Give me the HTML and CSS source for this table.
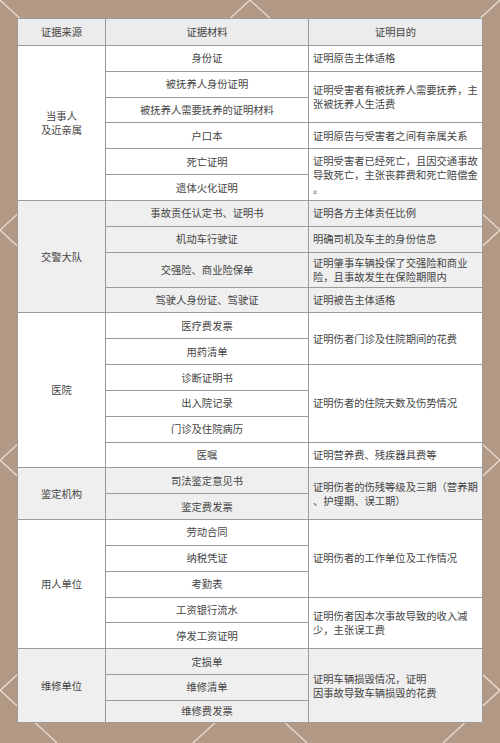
FILE: index.html
```html
<!DOCTYPE html>
<html lang="zh">
<head>
<meta charset="utf-8">
<link rel="stylesheet" href="styles.css">
</head>
<body>
<div class="page">
  <svg class="deco" width="500" height="743" viewBox="0 0 500 743" aria-hidden="true">
    <g class="lattice">
      <line x1="0" y1="0" x2="807" y2="743"/>
      <line x1="250" y1="0" x2="1057" y2="743"/>
      <line x1="0" y1="230" x2="557" y2="743"/>
      <line x1="0" y1="460" x2="307" y2="743"/>
      <line x1="0" y1="690" x2="57" y2="743"/>
      <line x1="500" y1="0" x2="-307" y2="743"/>
      <line x1="250" y1="0" x2="-557" y2="743"/>
      <line x1="500" y1="230" x2="-57" y2="743"/>
      <line x1="500" y1="460" x2="193" y2="743"/>
      <line x1="500" y1="690" x2="443" y2="743"/>
    </g>
  </svg>
  <table class="evidence">
    <colgroup>
      <col class="c1"><col class="c2"><col class="c3">
    </colgroup>
    <thead>
      <tr class="head"><th>证据来源</th><th>证据材料</th><th>证明目的</th></tr>
    </thead>
    <tbody class="white">
      <tr class="r"><td class="src" rowspan="6">当事人<br>及近亲属</td><td class="mat">身份证</td><td class="aim">证明原告主体适格</td></tr>
      <tr class="r"><td class="mat">被抚养人身份证明</td><td class="aim" rowspan="2">证明受害者有被抚养人需要抚养，主<br>张被抚养人生活费</td></tr>
      <tr class="r"><td class="mat">被抚养人需要抚养的证明材料</td></tr>
      <tr class="r"><td class="mat">户口本</td><td class="aim">证明原告与受害者之间有亲属关系</td></tr>
      <tr class="r"><td class="mat">死亡证明</td><td class="aim" rowspan="2">证明受害者已经死亡，且因交通事故<br>导致死亡，主张丧葬费和死亡赔偿金<br>。</td></tr>
      <tr class="r"><td class="mat">遗体火化证明</td></tr>
    </tbody>
    <tbody class="grey">
      <tr class="r"><td class="src" rowspan="4">交警大队</td><td class="mat">事故责任认定书、证明书</td><td class="aim">证明各方主体责任比例</td></tr>
      <tr class="r"><td class="mat">机动车行驶证</td><td class="aim">明确司机及车主的身份信息</td></tr>
      <tr class="tall"><td class="mat">交强险、商业险保单</td><td class="aim">证明肇事车辆投保了交强险和商业<br>险，且事故发生在保险期限内</td></tr>
      <tr class="r"><td class="mat">驾驶人身份证、驾驶证</td><td class="aim">证明被告主体适格</td></tr>
    </tbody>
    <tbody class="white">
      <tr class="r"><td class="src" rowspan="6">医院</td><td class="mat">医疗费发票</td><td class="aim" rowspan="2">证明伤者门诊及住院期间的花费</td></tr>
      <tr class="r"><td class="mat">用药清单</td></tr>
      <tr class="r"><td class="mat">诊断证明书</td><td class="aim" rowspan="3">证明伤者的住院天数及伤势情况</td></tr>
      <tr class="r"><td class="mat">出入院记录</td></tr>
      <tr class="r"><td class="mat">门诊及住院病历</td></tr>
      <tr class="r"><td class="mat">医嘱</td><td class="aim">证明营养费、残疾器具费等</td></tr>
    </tbody>
    <tbody class="grey">
      <tr class="r"><td class="src" rowspan="2">鉴定机构</td><td class="mat">司法鉴定意见书</td><td class="aim" rowspan="2">证明伤者的伤残等级及三期（营养期<br>、护理期、误工期）</td></tr>
      <tr class="r"><td class="mat">鉴定费发票</td></tr>
    </tbody>
    <tbody class="white">
      <tr class="r"><td class="src" rowspan="5">用人单位</td><td class="mat">劳动合同</td><td class="aim" rowspan="3">证明伤者的工作单位及工作情况</td></tr>
      <tr class="r"><td class="mat">纳税凭证</td></tr>
      <tr class="r"><td class="mat">考勤表</td></tr>
      <tr class="r"><td class="mat">工资银行流水</td><td class="aim" rowspan="2">证明伤者因本次事故导致的收入减<br>少，主张误工费</td></tr>
      <tr class="r"><td class="mat">停发工资证明</td></tr>
    </tbody>
    <tbody class="grey">
      <tr class="r"><td class="src" rowspan="3">维修单位</td><td class="mat">定损单</td><td class="aim" rowspan="3">证明车辆损毁情况，证明<br>因事故导致车辆损毁的花费</td></tr>
      <tr class="r"><td class="mat">维修清单</td></tr>
      <tr class="last"><td class="mat">维修费发票</td></tr>
    </tbody>
  </table>
</div>
</body>
</html>
```

FILE: styles.css
```css
html, body {
  margin: 0;
  padding: 0;
}

body {
  background: #b29985;
  font-family: "Noto Sans CJK SC", "Noto Sans", sans-serif;
  color: #444;
}

.page {
  position: relative;
  width: 500px;
  height: 743px;
  overflow: hidden;
  padding: 18px 0 0 17px;
  box-sizing: border-box;
}

.deco {
  position: absolute;
  left: 0;
  top: 0;
}

.lattice line {
  stroke: #e9dccd;
  stroke-width: 1.3;
}

.evidence {
  position: relative;
  width: 465px;
  table-layout: fixed;
  border-collapse: collapse;
  background: #fff;
  font-size: 10.3px;
  line-height: 14px;
}

.c1 { width: 88px; }
.c2 { width: 203px; }
.c3 { width: 174px; }

.evidence th,
.evidence td {
  border: 1px solid #9b9b9b;
  padding: 0 4px;
  font-weight: normal;
  vertical-align: middle;
  white-space: nowrap;
}

.head {
  height: 27px;
  background: #ececec;
}

.head th { text-align: center; }

.r { height: 25.83px; }
.tall { height: 35px; }
.last { height: 22px; }

.white { background: #fff; }
.grey { background: #efefef; }

.src, .mat { text-align: center; }
.aim { text-align: left; }
```
